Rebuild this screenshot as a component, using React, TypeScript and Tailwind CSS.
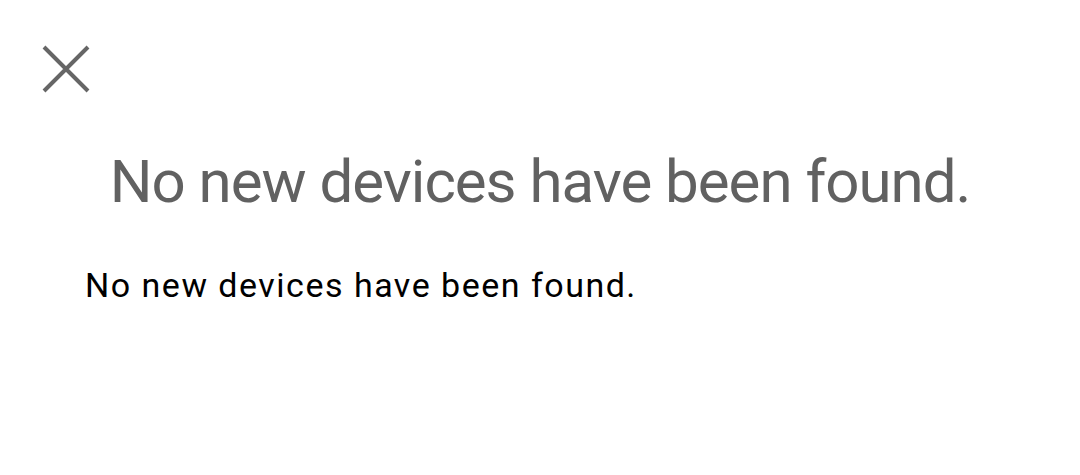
export default function App() {
  return (
    <div className="w-[1080px] h-[475px] bg-white overflow-hidden font-['Roboto',sans-serif]">
      <div className="pt-[44px] pl-[41px]">
        <button type="button" aria-label="Close" className="block w-[50px] h-[50px]">
          <svg width="50" height="50" viewBox="0 0 50 50" fill="none">
            <path d="M3 3L47 47M47 3L3 47" stroke="#666666" strokeWidth={4} />
          </svg>
        </button>
      </div>
      <h1 className="mt-[58px] text-center text-[60px] leading-none tracking-[-1px] text-[#616161]">
        No new devices have been found.
      </h1>
      <p className="mt-[56px] pl-[85px] text-[34px] leading-none tracking-[1.5px] text-black">
        No new devices have been found.
      </p>
    </div>
  );
}
